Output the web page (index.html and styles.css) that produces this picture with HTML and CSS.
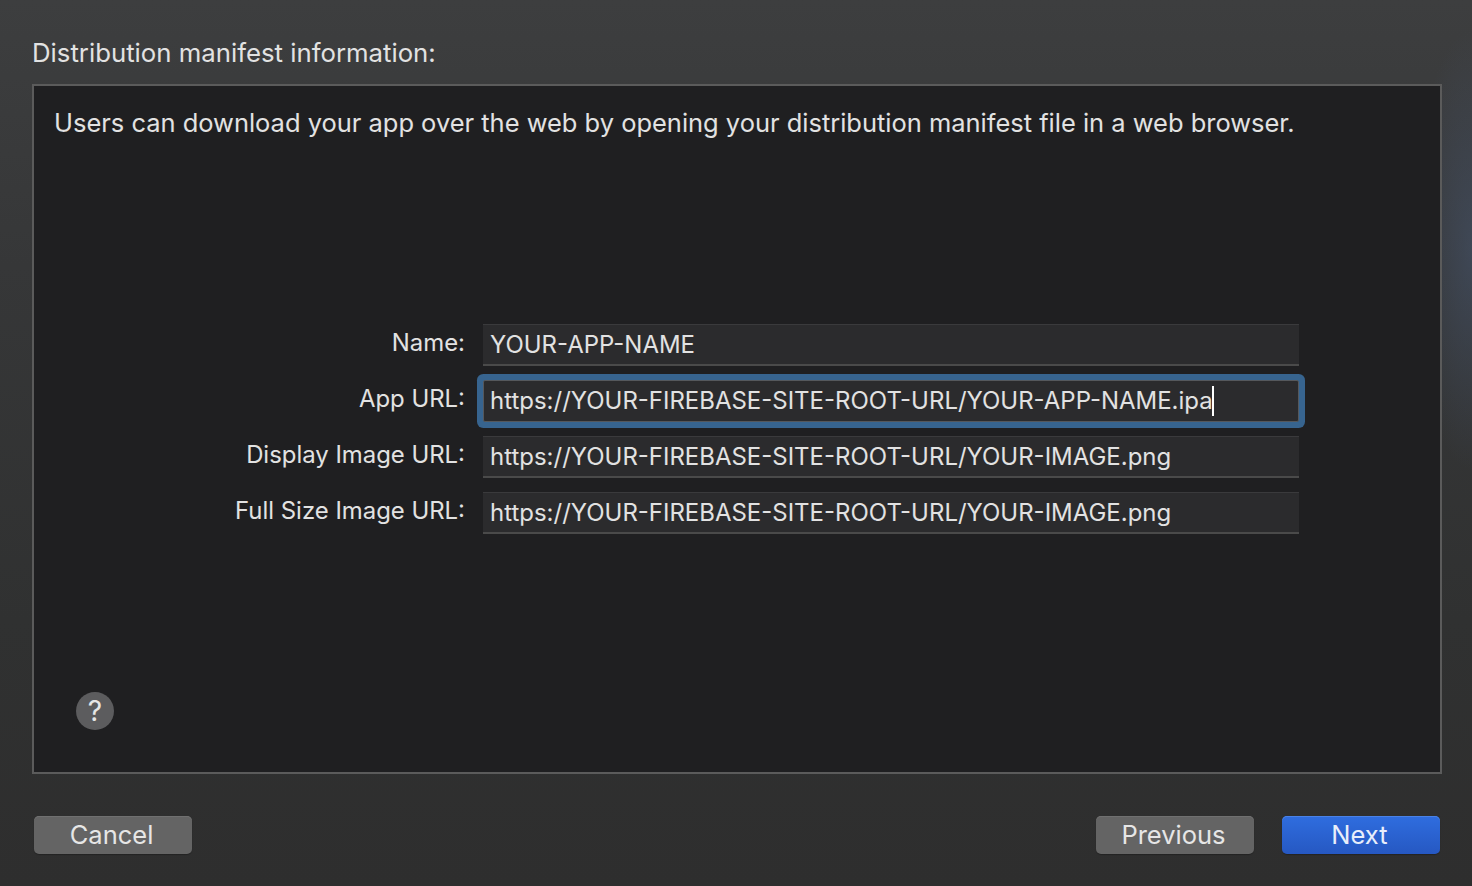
FILE: index.html
```html
<!DOCTYPE html>
<html lang="en">
<head>
<meta charset="utf-8">
<title>Distribution manifest information</title>
<link rel="stylesheet" href="styles.css">
</head>
<body>
<main class="dialog">
  <h1 class="heading">Distribution manifest information:</h1>
  <section class="panel">
    <p class="description">Users can download your app over the web by opening your distribution manifest file in a web browser.</p>
    <div class="form">
      <div class="label">Name:</div>
      <div class="field">YOUR-APP-NAME</div>
      <div class="label">App URL:</div>
      <div class="field field-focus">https://YOUR-FIREBASE-SITE-ROOT-URL/YOUR-APP-NAME.ipa<span class="caret"></span></div>
      <div class="label">Display Image URL:</div>
      <div class="field">https://YOUR-FIREBASE-SITE-ROOT-URL/YOUR-IMAGE.png</div>
      <div class="label">Full Size Image URL:</div>
      <div class="field">https://YOUR-FIREBASE-SITE-ROOT-URL/YOUR-IMAGE.png</div>
    </div>
    <div class="help-row"><div class="help">?</div></div>
  </section>
  <footer class="footer">
    <button class="btn">Cancel</button>
    <div class="footer-right">
      <button class="btn">Previous</button>
      <button class="btn btn-primary">Next</button>
    </div>
  </footer>
</main>
</body>
</html>
```
FILE: styles.css
```css
* { box-sizing: border-box; }
html, body { margin: 0; height: 100%; }
body {
  width: 1472px;
  height: 886px;
  overflow: hidden;
  font-family: Inter, "Liberation Sans", sans-serif;
  color: #e2e2e2;
  background:
    radial-gradient(ellipse 60px 220px at 100% 250px, rgba(70, 85, 110, 0.55), rgba(70, 85, 110, 0)),
    linear-gradient(180deg, #3d3e3f 0%, #363738 30%, #303131 70%, #2e2e2e 100%);
}
.dialog {
  height: 886px;
  padding: 0 30px 0 32px;
  display: flex;
  flex-direction: column;
}
.heading {
  margin: 0;
  height: 84px;
  padding-top: 38px;
  font-size: 25.75px;
  line-height: 30px;
  font-weight: 400;
}
.panel {
  height: 690px;
  background: #1f1f21;
  border: 2px solid #5b5b5b;
  display: flex;
  flex-direction: column;
  justify-content: space-between;
}
.description {
  margin: 0;
  height: 80px;
  padding: 22px 0 0 20px;
  font-size: 25.46px;
  line-height: 30px;
}
.form {
  display: grid;
  grid-template-columns: 431px 816px;
  column-gap: 18px;
  row-gap: 14px;
  grid-auto-rows: 42px;
}
.label {
  text-align: right;
  font-size: 23.9px;
  line-height: 38px;
  white-space: nowrap;
}
.field {
  position: relative;
  padding-left: 7px;
  background: #2b2b2d;
  border-top: 1px solid #3a3a3c;
  border-bottom: 2px solid #4a4a4a;
  font-size: 23.97px;
  line-height: 40px;
  white-space: nowrap;
}
.field-focus {
  border: 1px solid #55585c;
  padding-left: 6px;
  box-shadow: 0 0 0 6px #37648f;
  border-radius: 2px;
}
.caret {
  display: inline-block;
  width: 2px;
  height: 30px;
  margin-left: -1px;
  background: #fff;
  vertical-align: -7px;
}
.help-row {
  height: 80px;
  padding-left: 42px;
}
.help {
  width: 38px;
  height: 38px;
  border-radius: 50%;
  background: #5c5c5e;
  color: #e6e6e6;
  font-size: 28px;
  line-height: 38px;
  text-align: center;
}
.footer {
  display: flex;
  justify-content: space-between;
  padding: 42px 2px 0 2px;
}
.footer-right {
  display: flex;
  gap: 28px;
}
.btn {
  width: 158px;
  height: 38px;
  padding: 0 3px 0 0;
  border: 0;
  border-radius: 5px;
  background: #646464;
  box-shadow: inset 0 1px 0 #707070, 0 1px 1px rgba(0, 0, 0, 0.25);
  color: #e6e6e6;
  font-family: inherit;
  font-size: 25.5px;
  line-height: 38px;
}
.btn-primary {
  background: linear-gradient(180deg, #2f6ddf 0%, #2658c2 100%);
  box-shadow: inset 0 1px 0 #4a82e6, 0 1px 1px rgba(0, 0, 0, 0.25);
  color: #e8eefb;
}
```
